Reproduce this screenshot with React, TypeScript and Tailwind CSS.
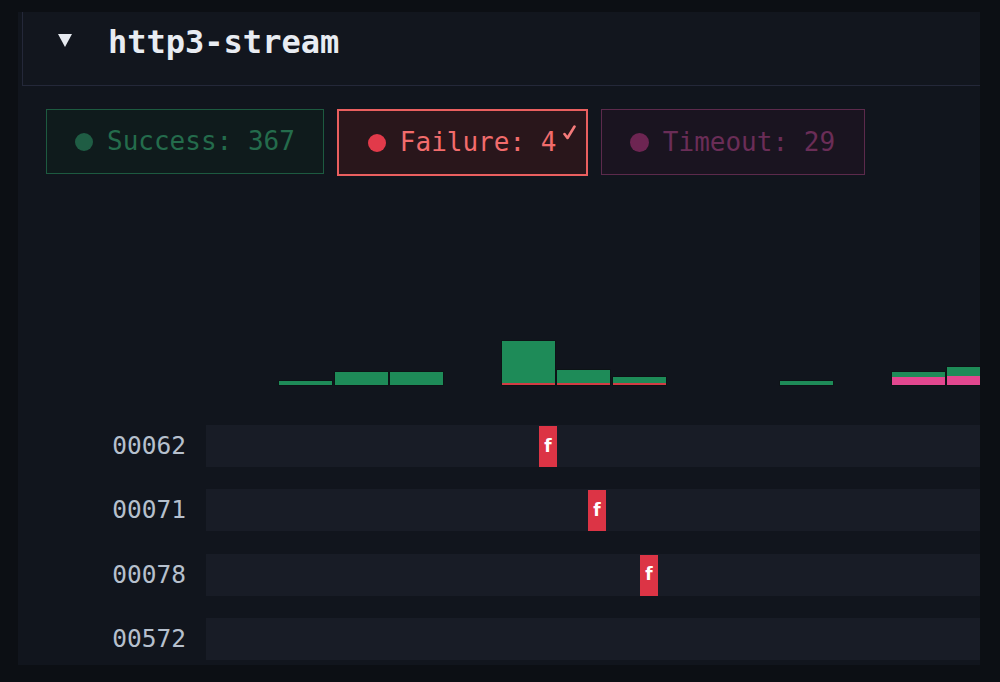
import React from "react";

const mono = { fontFamily: '"DejaVu Sans Mono", "Liberation Mono", monospace' };

type Bar = { x: number; top: number; green: number; red?: boolean; pink?: number };

const bars: Bar[] = [
  { x: 73, top: 381, green: 4 },
  { x: 129, top: 372, green: 13 },
  { x: 184, top: 372, green: 13 },
  { x: 296, top: 341, green: 44, red: true },
  { x: 351, top: 370, green: 15, red: true },
  { x: 407, top: 377, green: 8, red: true },
  { x: 574, top: 381, green: 4 },
  { x: 686, top: 372, green: 5, pink: 8 },
  { x: 741, top: 367, green: 9, pink: 9 },
];

function Chart() {
  const base = 325;
  return (
    <svg width={774} height={62} className="block">
      {bars.map((b, i) => {
        const h = 385 - b.top;
        const y = b.top - base;
        const w = 53;
        return (
          <g key={i}>
            <rect x={b.x - 0.5} y={y - 0.5} width={w + 1} height={h + 1} fill="#0b1210" />
            <rect x={b.x} y={y} width={w} height={h} fill="#1e8b58" />
            {b.pink ? <rect x={b.x} y={y + b.green} width={w} height={b.pink} fill="#e2478f" /> : null}
            {b.red ? <rect x={b.x} y={y + h - 2} width={w} height={2} fill="#d23c44" /> : null}
          </g>
        );
      })}
    </svg>
  );
}

const rows = [
  { id: "00062", mark: 333 },
  { id: "00071", mark: 382 },
  { id: "00078", mark: 434 },
  { id: "00572", mark: null as number | null },
];

export default function App() {
  return (
    <div className="w-[1000px] h-[682px] bg-[#0c0f14] overflow-hidden pl-[18px] pt-[12px]" style={mono}>
      <div className="w-[962px] h-[653px] bg-[#11151d] flex flex-col overflow-hidden">
        {/* header */}
        <div className="ml-[4px] h-[74px] border-l border-b border-[#242839] bg-[#12161e] flex items-start pt-[10px] shrink-0">
          <svg width={14} height={13} className="ml-[35px] mt-[12px]" viewBox="0 0 14 13">
            <polygon points="0,0 14,0 7,13" fill="#e6eaf0" />
          </svg>
          <span className="ml-[36px] text-[32px] leading-[40px] font-bold text-[#e8ecf2]">http3-stream</span>
        </div>

        {/* filter buttons */}
        <div className="flex items-start gap-[13px] ml-[28px] mt-[23px] shrink-0">
          <div className="h-[65px] border border-[#1d5a40] bg-[#0f1b1c] flex items-center pl-[28px] pr-[28px]">
            <span className="w-[18px] h-[18px] rounded-full bg-[#1f5d44]" />
            <span className="ml-[14px] text-[26px] text-[#246c4c]">Success: 367</span>
          </div>
          <div className="relative h-[67px] w-[251px] border-2 border-[#ea5f5f] bg-[#29161b] flex items-center pl-[29px]">
            <span className="w-[18px] h-[18px] rounded-full bg-[#e23a4a]" />
            <span className="ml-[14px] text-[26px] text-[#f26c6c]">Failure: 4</span>
            <svg width={13} height={15} viewBox="0 0 13 15" className="absolute left-[224px] top-[14px]">
              <polyline points="1.5,9 4.5,13 11.5,1.5" fill="none" stroke="#f47a7a" strokeWidth={2.6} strokeLinecap="round" strokeLinejoin="round" />
            </svg>
          </div>
          <div className="h-[66px] w-[264px] border border-[#5c2a4c] bg-[#1a1420] flex items-center pl-[28px]">
            <span className="w-[19px] h-[19px] rounded-full bg-[#6d2552]" />
            <span className="ml-[14px] text-[26px] text-[#6a2d57]">Timeout: 29</span>
          </div>
        </div>

        {/* chart */}
        <div className="h-[250px] shrink-0 flex items-end pl-[188px] pb-[38px] -mt-[1px]">
          <Chart />
        </div>

        {/* rows */}
        <div className="flex flex-col gap-[22.33px]">
          {rows.map((r) => (
            <div key={r.id} className="flex items-center h-[42px]">
              <span className="w-[168px] text-right text-[24.5px] leading-[30px] text-[#b6c0cd]">{r.id}</span>
              <div className="relative ml-[20px] flex-1 h-[42px] bg-[#181c26]">
                {r.mark !== null ? (
                  <div
                    className="absolute top-[1px] w-[18px] h-[41px] bg-[#dc3445] flex items-center justify-center text-white text-[17px] font-bold"
                    style={{ left: r.mark, fontFamily: '"DejaVu Sans", sans-serif' }}
                  >
                    f
                  </div>
                ) : null}
              </div>
            </div>
          ))}
        </div>
      </div>
    </div>
  );
}
